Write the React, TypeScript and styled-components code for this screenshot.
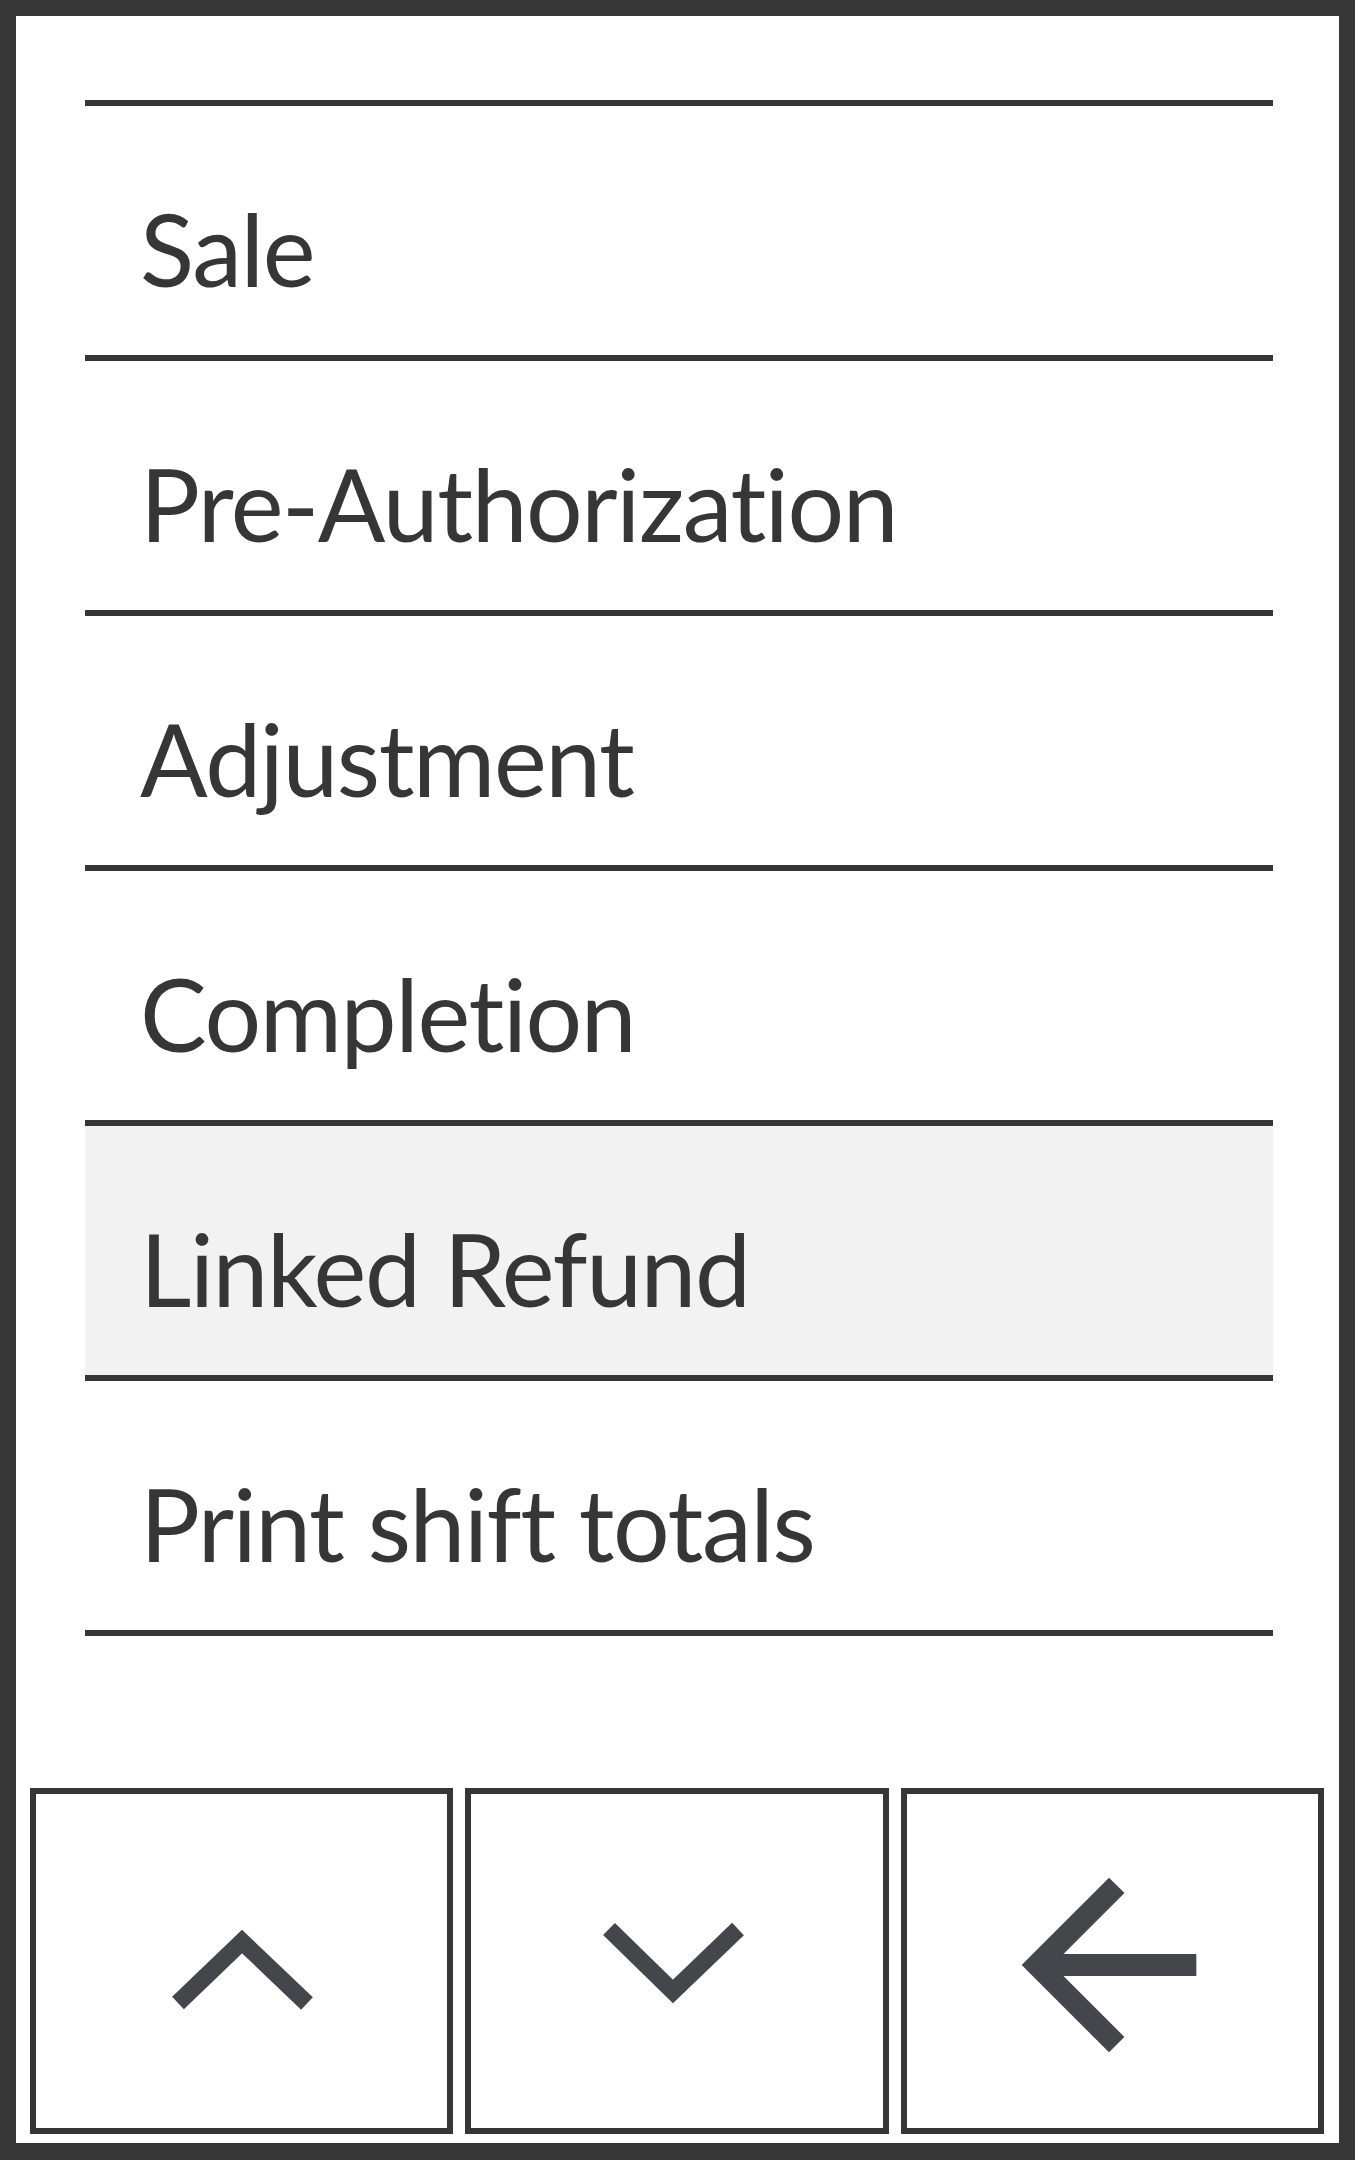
import React from 'react';
import styled, { createGlobalStyle } from 'styled-components';

const GlobalStyle = createGlobalStyle`
  html, body {
    margin: 0;
    padding: 0;
    background: #363636;
  }
  * {
    box-sizing: border-box;
  }
`

const Frame = styled.div`
  width: 1355px;
  height: 2160px;
  padding: 16px 16px 17px;
  background: #363636;
`
const Panel = styled.div`
  display: flex;
  flex-direction: column;
  height: 100%;
  background: #FFFFFF;
  padding: 84px 15px 9px 14px;
`
const Menu = styled.ul`
  list-style: none;
  margin: 0 51px 0 55px;
  padding: 0;
  border-top: 6px solid #363636;
`
const MenuItem = styled.li<{ selected?: boolean }>`
  height: 255px;
  border-bottom: 6px solid #363636;
  padding: 82px 0 0 55px;
  background: ${(p) => (p.selected ? '#F2F2F2' : 'transparent')};
  color: #363636;
  font-family: Lato, 'Noto Sans', sans-serif;
  font-size: 100px;
  line-height: 120px;
  letter-spacing: -1.4px;
  font-variant-ligatures: none;
  font-feature-settings: "liga" 0, "clig" 0;
  white-space: nowrap;
`
const ButtonRow = styled.div`
  display: grid;
  grid-template-columns: repeat(3, 1fr);
  gap: 12px;
  margin-top: auto;
  height: 346px;
`
const NavButton = styled.button`
  display: flex;
  align-items: center;
  justify-content: center;
  margin: 0;
  padding: 0;
  background: #FFFFFF;
  border: 6px solid #363636;
  border-radius: 0;
  cursor: pointer;
`
const Icon = styled.svg`
  display: block;
  fill: none;
  stroke: #45464B;
`

const ChevronUp = () => (
  <Icon width="160" height="100" viewBox="0 0 160 100">
    <polyline points="16,92 80,30.5 145,92.5" strokeWidth="17" strokeLinejoin="miter" strokeLinecap="butt" />
  </Icon>
)

const ChevronDown = () => (
  <Icon width="160" height="100" viewBox="0 0 160 100">
    <polyline points="12,18 76,80.5 141,18" strokeWidth="17" strokeLinejoin="miter" strokeLinecap="butt" />
  </Icon>
)

const ArrowBack = () => (
  <Icon width="262" height="262" viewBox="0 0 24 24" style={{ marginLeft: -7, marginTop: 8 }}>
    <path d="M20 11H7.83l5.59-5.59L12 4l-8 8 8 8 1.41-1.41L7.83 13H20v-2z" fill="#45464B" stroke="none" />
  </Icon>
)

const items = [
  'Sale',
  'Pre-Authorization',
  'Adjustment',
  'Completion',
  'Linked Refund',
  'Print shift totals',
];

export default class App extends React.Component {
  render() {
    return (
      <>
        <GlobalStyle />
        <Frame>
          <Panel>
            <Menu>
              {items.map((item) => (
                <MenuItem key={item} selected={item === 'Linked Refund'}>{item}</MenuItem>
              ))}
            </Menu>
            <ButtonRow>
              <NavButton aria-label="up"><ChevronUp /></NavButton>
              <NavButton aria-label="down"><ChevronDown /></NavButton>
              <NavButton aria-label="back"><ArrowBack /></NavButton>
            </ButtonRow>
          </Panel>
        </Frame>
      </>
    )
  }
}
